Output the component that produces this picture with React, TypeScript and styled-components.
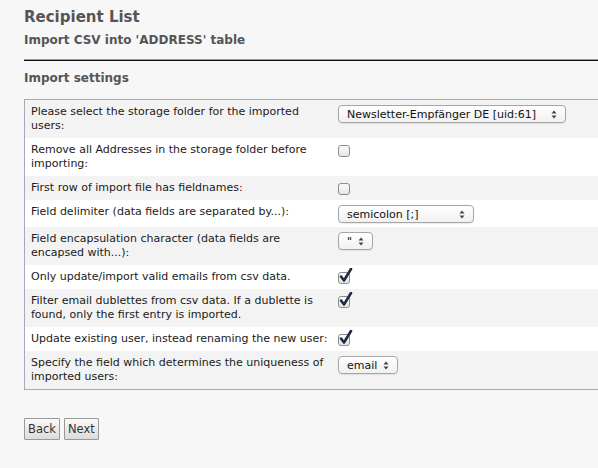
import React, { FC } from 'react';
import styled, { createGlobalStyle } from 'styled-components';

const GlobalStyle = createGlobalStyle`
  html, body {
    margin: 0;
    padding: 0;
    background: #f7f7f7;
    overflow: hidden;
  }
  body {
    font-family: "DejaVu Sans", Verdana, sans-serif;
    color: #222;
  }
`;

const Page = styled.div`
  box-sizing: border-box;
  width: 598px;
  height: 468px;
  padding: 7px 0 0 24px;
  overflow: hidden;
`;

const Title = styled.h1`
  margin: 0;
  font-size: 15px;
  line-height: 20px;
  font-weight: bold;
  color: #555;
`;

const SubTitle = styled.h2`
  margin: 5px 0 0;
  font-size: 12px;
  line-height: 16px;
  font-weight: bold;
  color: #555;
`;

const Rule = styled.div`
  height: 1px;
  margin: 11px 0 0;
  border-top: 1px solid #999;
  background: #111;
`;

const SectionTitle = styled.h3`
  margin: 9px 0 0;
  font-size: 12px;
  line-height: 16px;
  font-weight: bold;
  color: #555;
`;

const Table = styled.div`
  width: 620px;
  margin-top: 13px;
  border: 1px solid #a3abb9;
  border-right: none;
`;

const Row = styled.div<{ $odd: boolean }>`
  display: grid;
  grid-template-columns: 309px 1fr;
  background: ${({ $odd }) => ($odd ? '#f3f3f3' : '#ffffff')};
`;

const Label = styled.div`
  padding: 5px 3px 5px 6px;
  font-size: 11px;
  line-height: 14px;
  color: #1a1a1a;
`;

const Value = styled.div`
  display: flex;
  align-items: flex-start;
  padding: 5px 0 4px 4px;
`;

const SelectBox = styled.div<{ $width: number }>`
  box-sizing: border-box;
  display: flex;
  align-items: center;
  justify-content: space-between;
  width: ${({ $width }) => $width}px;
  height: 18px;
  padding: 0 8px 0 8px;
  border: 1px solid #a6a6a6;
  border-radius: 4px;
  background: linear-gradient(#ffffff, #f1f1f1);
  box-shadow: 0 1px 1px rgba(0, 0, 0, 0.08);
  font-size: 11px;
  color: #111;
  white-space: nowrap;
`;

const Check = styled.span`
  position: relative;
  display: inline-block;
  box-sizing: border-box;
  width: 12px;
  height: 12px;
  margin-top: 2px;
  border: 1px solid #8c8c8c;
  border-radius: 3px;
  background: linear-gradient(#fdfdfd, #e6e6e6);
`;

const Tick = styled.svg`
  position: absolute;
  left: 0px;
  top: -5px;
`;

const Buttons = styled.div`
  display: flex;
  gap: 4px;
  margin-top: 28px;
`;

const Button = styled.button`
  height: 22px;
  padding: 0 3px;
  border: 1px solid #999;
  border-radius: 1px;
  background: linear-gradient(#fafafa, #dcdcdc);
  font-family: "DejaVu Sans", Verdana, sans-serif;
  font-size: 11.5px;
  color: #333;
`;

const Arrows: FC = () => (
  <svg width="6" height="9" viewBox="0 0 6 9">
    <path d="M3 0.5 L5.5 3.5 H0.5 Z" fill="#444" />
    <path d="M3 8.5 L5.5 5.5 H0.5 Z" fill="#444" />
  </svg>
);

const Select: FC<{ text: string; width: number }> = ({ text, width }) => (
  <SelectBox $width={width}>
    <span>{text}</span>
    <Arrows />
  </SelectBox>
);

const Checkbox: FC<{ checked?: boolean }> = ({ checked }) => (
  <Check>
    {checked && (
      <Tick width="14" height="15" viewBox="0 0 14 15">
        <path d="M2 8.5 L5 12.5 L12 1" stroke="#1f2a44" strokeWidth="2.6" fill="none" strokeLinecap="round" strokeLinejoin="round" />
      </Tick>
    )}
  </Check>
);

interface Setting {
  label: string;
  control: React.ReactNode;
}

const settings: Setting[] = [
  { label: 'Please select the storage folder for the imported users:', control: <Select text="Newsletter-Empfänger DE [uid:61]" width={228} /> },
  { label: 'Remove all Addresses in the storage folder before importing:', control: <Checkbox /> },
  { label: 'First row of import file has fieldnames:', control: <Checkbox /> },
  { label: 'Field delimiter (data fields are separated by...):', control: <Select text="semicolon [;]" width={136} /> },
  { label: 'Field encapsulation character (data fields are encapsed with...):', control: <Select text={'"'} width={35} /> },
  { label: 'Only update/import valid emails from csv data.', control: <Checkbox checked /> },
  { label: 'Filter email dublettes from csv data. If a dublette is found, only the first entry is imported.', control: <Checkbox checked /> },
  { label: 'Update existing user, instead renaming the new user:', control: <Checkbox checked /> },
  { label: 'Specify the field which determines the uniqueness of imported users:', control: <Select text="email" width={60} /> },
];

const App: FC = () => (
  <Page>
    <GlobalStyle />
    <Title>Recipient List</Title>
    <SubTitle>Import CSV into 'ADDRESS' table</SubTitle>
    <Rule />
    <SectionTitle>Import settings</SectionTitle>
    <Table>
      {settings.map((s, i) => (
        <Row key={s.label} $odd={i % 2 === 0}>
          <Label>{s.label}</Label>
          <Value>{s.control}</Value>
        </Row>
      ))}
    </Table>
    <Buttons>
      <Button>Back</Button>
      <Button>Next</Button>
    </Buttons>
  </Page>
);

export default App;
